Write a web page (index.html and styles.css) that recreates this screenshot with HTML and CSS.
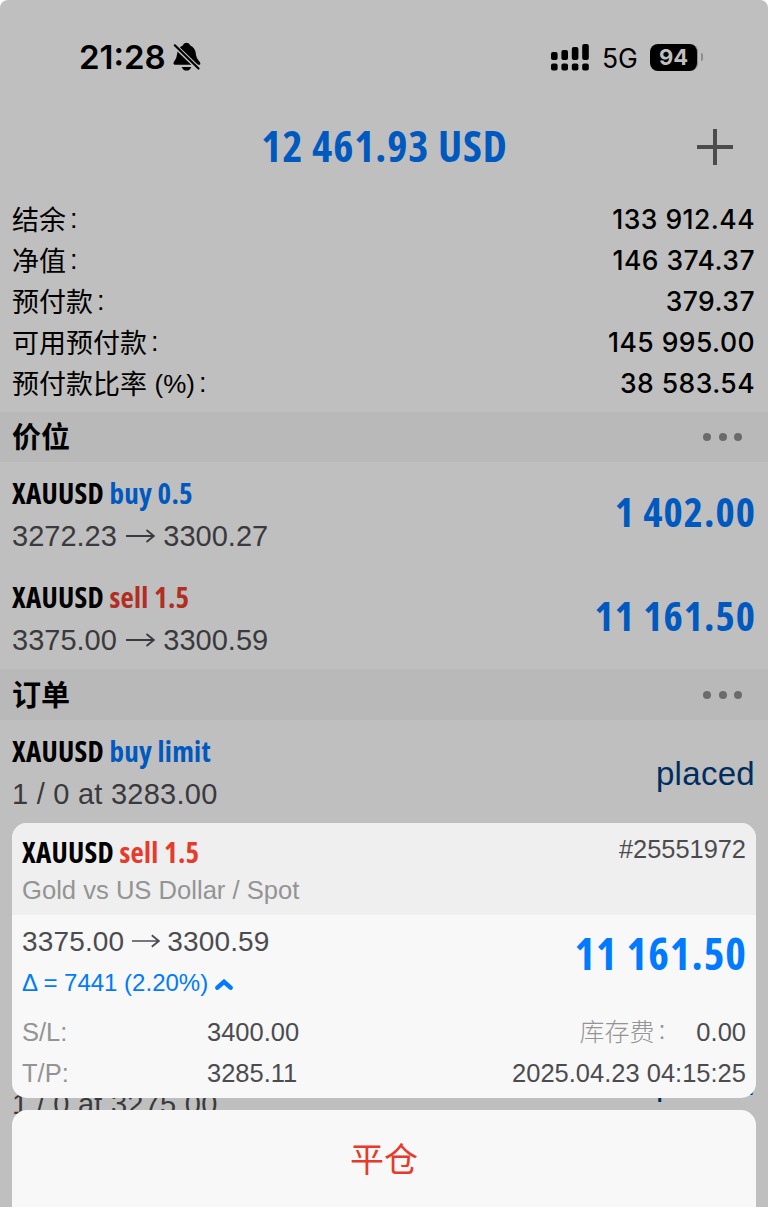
FILE: index.html
```html
<!DOCTYPE html>
<html lang="zh-CN">
<head>
  <meta charset="UTF-8">
  <meta name="viewport" content="width=device-width, initial-scale=1.0">
  <title>Trade</title>
  <link rel="stylesheet" href="styles.css">
</head>
<body>
  <div class="screen">
    <div class="status-bar">
      <span class="clock">21:28</span>
      <svg class="bell" width="29" height="30" viewBox="0 0 29 30">
        <path d="M14.500 .8Q17.500 .8 18.300 3.400Q23 5.500 23.700 11Q24 16 27.500 19.500Q29 21.500 28 22.800H3Q.8 22.600 1.800 20Q5 16 5.300 11Q6 5.500 10.700 3.400Q11.500 .8 14.500 .8Z"/>
        <path d="M9.700 24.900H19.300Q18 28.500 14.500 28.500Q11 28.500 9.700 24.900Z"/>
        <path class="cut" d="M0 1L29 29"/>
        <path class="slash" d="M2.800 3.300L26.500 26.500"/>
      </svg>
      <svg class="signal" width="40" height="28" viewBox="0 0 40 28">
        <rect x="1" y="9" width="6.600" height="8" rx="2"/>
        <rect x="11.400" y="7" width="6.600" height="10" rx="2"/>
        <rect x="21.800" y="4" width="6.600" height="13" rx="2"/>
        <rect x="32.200" y="1" width="6.600" height="16" rx="2"/>
        <rect x="1" y="20.500" width="6.600" height="7" rx="2"/>
        <rect x="11.400" y="20.500" width="6.600" height="7" rx="2"/>
        <rect x="21.800" y="20.500" width="6.600" height="7" rx="2"/>
        <rect x="32.200" y="20.500" width="6.600" height="7" rx="2"/>
      </svg>
      <span class="network">5G</span>
      <span class="battery">94</span>
      <span class="battery-tip"></span>
    </div>

    <div class="title-bar">
      <h1 class="narrow">12 461.93 USD</h1>
      <svg class="plus" width="36" height="36" viewBox="0 0 36 36">
        <path d="M18 0V36M0 18H36"/>
      </svg>
    </div>

    <div class="account">
      <div class="line"><span>结余<i>:</i></span><b>133 912.44</b></div>
      <div class="line"><span>净值<i>:</i></span><b>146 374.37</b></div>
      <div class="line"><span>预付款<i>:</i></span><b>379.37</b></div>
      <div class="line"><span>可用预付款<i>:</i></span><b>145 995.00</b></div>
      <div class="line"><span>预付款比率 <em>(%)</em><i>:</i></span><b>38 583.54</b></div>
    </div>

    <div class="section">
      <h2>价位</h2>
      <div class="dots"><span></span><span></span><span></span></div>
    </div>
    <div class="trade">
      <div>
        <div class="symbol narrow">XAUUSD <span class="buy">buy 0.5</span></div>
        <div class="price">3272.23<svg class="arrow" width="29" height="14" viewBox="0 0 29 14"><path d="M0 7H27.500M20.500 1L27.800 7L20.500 13"/></svg>3300.27</div>
      </div>
      <div class="profit narrow">1 402.00</div>
    </div>
    <div class="trade">
      <div>
        <div class="symbol narrow">XAUUSD <span class="sell">sell 1.5</span></div>
        <div class="price">3375.00<svg class="arrow" width="29" height="14" viewBox="0 0 29 14"><path d="M0 7H27.500M20.500 1L27.800 7L20.500 13"/></svg>3300.59</div>
      </div>
      <div class="profit narrow">11 161.50</div>
    </div>

    <div class="section">
      <h2>订单</h2>
      <div class="dots"><span></span><span></span><span></span></div>
    </div>
    <div class="trade">
      <div>
        <div class="symbol narrow">XAUUSD <span class="buy">buy limit</span></div>
        <div class="price order">1 / 0 at 3283.00</div>
      </div>
      <div class="placed">placed</div>
    </div>
    <div class="trade"></div>
    <div class="trade"></div>
    <div class="trade">
      <div>
        <div class="symbol"></div>
        <div class="price order">1 / 0 at 3275.00</div>
      </div>
      <div class="placed">placed</div>
    </div>
  </div>

  <div class="sheet">
    <div class="card">
      <div class="card-head">
        <div>
          <div class="symbol narrow">XAUUSD <span class="sell">sell 1.5</span></div>
          <div class="desc">Gold vs US Dollar / Spot</div>
        </div>
        <div class="ticket">#25551972</div>
      </div>
      <div class="card-body">
        <div class="result">
          <div>
            <div class="price">3375.00<svg class="arrow" width="28" height="14" viewBox="0 0 29 14"><path d="M0 7H27.500M20.500 1L27.800 7L20.500 13"/></svg>3300.59</div>
            <div class="delta">Δ = 7441 (2.20%)<svg width="18" height="12" viewBox="0 0 18 12"><path d="M2.400 8.700L9 2.800L15.600 8.700"/></svg></div>
          </div>
          <div class="profit narrow">11 161.50</div>
        </div>
        <div class="details">
          <span class="label">S/L:</span><span>3400.00</span><span class="right"><span class="label swap">库存费<i>:</i></span>0.00</span>
          <span class="label">T/P:</span><span>3285.11</span><span class="right">2025.04.23 04:15:25</span>
        </div>
      </div>
    </div>
    <div class="close-btn">平仓</div>
  </div>
</body>
</html>
```
FILE: styles.css
```css
body {
  margin: 0;
  width: 769px;
  height: 1208px;
  position: relative;
  overflow: hidden;
  background-color: white;
  font-family: "Liberation Sans", "Noto Sans CJK SC", sans-serif;
}

h1, h2 {
  margin: 0;
}

i, em {
  font-style: normal;
}

.screen {
  width: 768px;
  height: 1207px;
  overflow: hidden;
  background-color: #bfbfbf;
  border-radius: 8px 8px 0 0;
}

/* status bar */
.status-bar {
  height: 114px;
  box-sizing: border-box;
  padding: 0 65px 0 79px;
  display: flex;
  align-items: center;
  font-family: Inter, sans-serif;
}

.clock {
  font-size: 33px;
  font-weight: 600;
  width: 92.5px;
}

.bell .cut {
  stroke: #bfbfbf;
  stroke-width: 4.6;
}

.bell .slash {
  stroke: black;
  stroke-width: 2.2;
  stroke-linecap: round;
}

.signal {
  margin-left: auto;
  margin-right: 12px;
}

.network {
  font-size: 26.5px;
  width: 48px;
  padding-top: 2px;
}

.battery {
  width: 47px;
  height: 27px;
  line-height: 27px;
  border-radius: 8px;
  background-color: black;
  border-right: 1px solid #8c8c8c;
  color: #bfbfbf;
  font-size: 22px;
  font-weight: 700;
  text-align: center;
}

.battery-tip {
  width: 2px;
  height: 8px;
  margin-left: 3px;
  border-radius: 0 3px 3px 0;
  background-color: #8c8c8c;
}

/* balance title */
.title-bar {
  height: 66px;
  padding: 0 35px 0 0;
  display: flex;
  align-items: center;
}

.title-bar h1 {
  flex: 1;
  padding: 0 0 2px 72px;
  text-align: center;
  font-size: 43px;
  line-height: 64px;
  color: #0059bf;
  letter-spacing: 0.9px;
}

.plus path {
  stroke: #4c4c4c;
  stroke-width: 4;
}

.narrow {
  font-family: "Open Sans", sans-serif;
  font-weight: 700;
  font-stretch: 75%;
  white-space: nowrap;
}

/* account summary */
.account {
  height: 232px;
  box-sizing: border-box;
  padding: 19px 13px 0 12px;
}

.line {
  height: 41px;
  line-height: 41px;
  display: flex;
  justify-content: space-between;
  font-size: 27px;
}

.line > span {
  padding-top: 2px;
}

.line em {
  font-size: 26px;
  line-height: 1;
  vertical-align: 1px;
}

.line b {
  font-family: Inter, sans-serif;
  font-weight: 500;
  font-size: 26.5px;
  letter-spacing: 0.45px;
}

i {
  margin-left: 4px;
  line-height: 1;
  vertical-align: 2px;
}

/* section headers */
.section {
  height: 50.4px;
  padding: 0 26px 0 12px;
  background-color: #b9b9b9;
  display: flex;
  align-items: center;
  justify-content: space-between;
}

.section h2 {
  padding-top: 3px;
  font-size: 29px;
  line-height: 47px;
}

.dots {
  display: flex;
  gap: 7.5px;
}

.dots span {
  width: 8px;
  height: 8px;
  border-radius: 50%;
  background-color: #6b6b6b;
}

/* positions and orders */
.trade {
  height: 103.5px;
  box-sizing: border-box;
  padding: 11px 13px 0 12px;
  display: flex;
  justify-content: space-between;
}

.symbol {
  height: 42px;
  line-height: 40px;
  font-size: 29px;
  letter-spacing: 0.25px;
}

.buy {
  color: #0059bf;
}

.sell {
  color: #b22d22;
}

.price {
  line-height: 43px;
  font-size: 29px;
  color: #3a3a3e;
}

.order {
  letter-spacing: 0.25px;
}

.arrow {
  margin: 0 8.5px 5px 9px;
  vertical-align: middle;
}

.arrow path {
  fill: none;
  stroke: #3a3a3e;
  stroke-width: 1.8;
}

.profit {
  line-height: 77px;
  font-size: 41px;
  letter-spacing: 1px;
  margin-right: -1px;
  color: #0059bf;
}

.placed {
  line-height: 86px;
  font-size: 33px;
  letter-spacing: 0.3px;
  color: #002d5f;
}

/* position sheet */
.sheet {
  position: absolute;
  left: 12px;
  top: 822.6px;
  width: 744px;
  height: 384.4px;
  overflow: hidden;
}

.card {
  height: 275.4px;
  margin-bottom: 12px;
  border-radius: 15px;
  background-color: #f8f8f8;
  overflow: hidden;
}

.card-head {
  height: 92px;
  box-sizing: border-box;
  padding: 9px 10px 0;
  background-color: #efefef;
  display: flex;
  justify-content: space-between;
}

.card .sell {
  color: #e63b2c;
}

.desc {
  font-size: 25.6px;
  line-height: 32px;
  color: #949494;
}

.ticket {
  font-size: 25.4px;
  line-height: 34px;
  color: #4c4c50;
}

.card-body {
  padding: 6px 10px 0;
}

.card .price {
  font-size: 28px;
  line-height: 42px;
  letter-spacing: 0.15px;
  color: #4c4c50;
}

.card .arrow {
  margin: 0 7px 4px 8px;
}

.card .arrow path {
  stroke: #4c4c50;
}

.card .profit {
  line-height: 64px;
  font-size: 44px;
  color: #007aff;
}

.result {
  height: 91px;
  display: flex;
  justify-content: space-between;
}

.delta {
  font-size: 24px;
  line-height: 40px;
  color: #007aff;
}

.delta svg {
  margin-left: 7px;
  vertical-align: 0;
}

.delta path {
  fill: none;
  stroke: #007aff;
  stroke-width: 4.4;
  stroke-linecap: round;
  stroke-linejoin: miter;
}

.details {
  display: grid;
  grid-template-columns: 185px 150px 1fr;
  grid-auto-rows: 41px;
  line-height: 41px;
  font-size: 25.5px;
  color: #4c4c50;
}

.label {
  color: #949494;
}

.right {
  text-align: right;
}

.swap {
  margin-right: 31px;
  font-size: 25px;
  font-weight: 300;
}

.close-btn {
  height: 97px;
  border-radius: 15px 15px 0 0;
  background-color: #f8f8f8;
  color: #e63b2c;
  font-size: 34px;
  line-height: 101px;
  text-align: center;
}
```
